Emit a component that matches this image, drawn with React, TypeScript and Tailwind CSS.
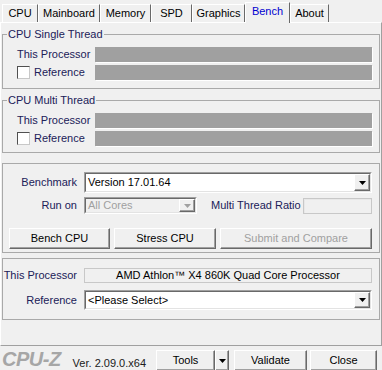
import React from "react";

const LBL = "text-[#202058]";

function Tri({ gray }: { gray?: boolean }) {
  return (
    <svg width="7" height="4" viewBox="0 0 7 4">
      <path d="M0 0h7L3.5 4z" fill={gray ? "#a0a0a0" : "#000"} />
    </svg>
  );
}

function Raised({ className, children }: { className: string; children?: React.ReactNode }) {
  return (
    <div
      className={
        "flex items-center justify-center bg-[#f0f0f0] border border-t-white border-l-white border-r-[#696969] border-b-[#696969] shadow-[inset_-1px_-1px_0_#a0a0a0] " +
        className
      }
    >
      {children}
    </div>
  );
}

function Combo({ className, text, disabled }: { className: string; text: string; disabled?: boolean }) {
  return (
    <div className={"border border-t-[#a0a0a0] border-l-[#a0a0a0] border-r-white border-b-white " + className}>
      <div
        className={
          "flex h-full border border-t-[#696969] border-l-[#696969] border-r-[#e3e3e3] border-b-[#e3e3e3] " +
          (disabled ? "bg-[#f0f0f0]" : "bg-white")
        }
      >
        <div className={"flex-1 flex items-center pl-[2px] " + (disabled ? "text-[#a0a0a0]" : "text-black")}>{text}</div>
        <Raised className="w-[16px] h-full">
          <Tri gray={disabled} />
        </Raised>
      </div>
    </div>
  );
}

function Bar() {
  return <div className="w-[277px] h-[15px] bg-[#a0a0a0] shadow-[1px_1px_0_#fff]" />;
}

function Checkbox() {
  return (
    <div className="w-[13px] h-[13px] bg-white border border-t-[#505050] border-l-[#505050] border-r-[#c8c8c8] border-b-[#c8c8c8]" />
  );
}

function Group({ title, pb, mt }: { title: string; pb: string; mt: string }) {
  return (
    <fieldset className={"mx-[1px] min-w-0 p-0 border border-[#a9a9a9] " + mt}>
      <legend className={"ml-[4px] px-[1px] leading-[13px] " + LBL}>{title}</legend>
      <div className={"flex flex-col gap-[3px] pt-[6px] pl-[14px] pr-[7px] " + pb}>
        <div className="flex items-center justify-between h-[15px]">
          <span className={LBL}>This Processor</span>
          <Bar />
        </div>
        <div className="flex items-center justify-between h-[15px]">
          <div className="flex items-center">
            <Checkbox />
            <span className={"ml-[4px] " + LBL}>Reference</span>
          </div>
          <Bar />
        </div>
      </div>
    </fieldset>
  );
}

const tabs: { name: string; w: string; sel?: boolean }[] = [
  { name: "CPU", w: "w-[36px]" },
  { name: "Mainboard", w: "w-[62px]" },
  { name: "Memory", w: "w-[51px]" },
  { name: "SPD", w: "w-[41px]" },
  { name: "Graphics", w: "w-[53px]" },
  { name: "Bench", w: "w-[45px]", sel: true },
  { name: "About", w: "w-[39px]" },
];

export default function App() {
  return (
    <div className="w-[382px] h-[370px] overflow-hidden bg-[#f0f0f0] flex flex-col text-[11px] leading-[13px] text-black font-['Liberation_Sans',Arial,sans-serif]">
      {/* Tabs */}
      <div className="h-[22px] flex items-end pl-[2px] shrink-0">
        {tabs.map((t) =>
          t.sel ? (
            <div
              key={t.name}
              className={
                "relative z-10 h-[21px] -mb-[1px] pb-[3px] flex items-center justify-center bg-[#f0f0f0] border-t border-l border-white border-r border-r-[#696969] text-[#0000d0] " +
                t.w
              }
            >
              {t.name}
            </div>
          ) : (
            <div
              key={t.name}
              className={
                "h-[18px] flex items-center justify-center border-t border-l border-white border-r border-r-[#696969] text-black " +
                t.w
              }
            >
              {t.name}
            </div>
          )
        )}
      </div>

      {/* Panel */}
      <div className="h-[324px] shrink-0 flex flex-col border border-t-white border-l-white border-r-[#a0a0a0] border-b-[#a0a0a0]">
        <Group title="CPU Single Thread" mt="mt-[5px]" pb="pb-[8px]" />
        <Group title="CPU Multi Thread" mt="mt-[5px]" pb="pb-[6px]" />

        {/* Benchmark section */}
        <div className="mx-[1px] mt-[10px] border border-[#a9a9a9] pt-[8px] pb-[3px] flex flex-col">
          <div className="flex items-center h-[21px]">
            <span className={"w-[74px] text-right " + LBL}>Benchmark</span>
            <Combo className="ml-[7px] w-[288px] h-[21px]" text="Version 17.01.64" />
          </div>
          <div className="flex items-center h-[17px] mt-[4px]">
            <span className={"w-[74px] text-right " + LBL}>Run on</span>
            <Combo className="ml-[7px] w-[113px] h-[17px]" text="All Cores" disabled />
            <span className={"ml-[14px] " + LBL}>Multi Thread Ratio</span>
            <div className="ml-auto mr-[7px] w-[69px] h-[16px] border border-[#c8c8c8] shadow-[inset_1px_1px_0_#e8e8e8]" />
          </div>
          <div className="flex items-center h-[21px] mt-[14px] pl-[6px]">
            <Raised className="w-[101px] h-[21px]">Bench CPU</Raised>
            <Raised className="ml-[4px] w-[102px] h-[21px]">Stress CPU</Raised>
            <Raised className="ml-[4px] w-[152px] h-[21px] text-[#a0a0a0]">Submit and Compare</Raised>
          </div>
        </div>

        {/* Reference section */}
        <div className="mx-[1px] mt-[5px] border border-[#a9a9a9] pt-[9px] pb-[9px] flex flex-col">
          <div className="flex items-center h-[15px]">
            <span className={"w-[74px] text-right " + LBL}>This Processor</span>
            <div className="ml-[7px] w-[288px] h-[15px] flex items-center justify-center border border-[#c8c8c8] bg-[#f0f0f0] text-black">
              AMD Athlon™ X4 860K Quad Core Processor
            </div>
          </div>
          <div className="flex items-center h-[20px] mt-[7px]">
            <span className={"w-[74px] text-right " + LBL}>Reference</span>
            <Combo className="ml-[7px] w-[288px] h-[20px]" text="<Please Select>" />
          </div>
        </div>
      </div>

      {/* Footer */}
      <div className="flex items-start h-[24px] shrink-0">
        <div className="ml-[2px] mt-[1px] text-[20px] leading-[24px] font-bold italic text-[#a6a6a6] tracking-[-0.5px]">CPU-Z</div>
        <div className="ml-[12px] mt-[11px] text-[#202020]">Ver. 2.09.0.x64</div>
        <div className="ml-[10px] mt-[4px] flex">
          <Raised className="w-[59px] h-[21px]">Tools</Raised>
          <Raised className="w-[14px] h-[21px]">
            <Tri />
          </Raised>
        </div>
        <Raised className="ml-[5px] mt-[4px] w-[73px] h-[21px]">Validate</Raised>
        <Raised className="ml-[3px] mt-[4px] w-[67px] h-[21px]">Close</Raised>
      </div>
    </div>
  );
}
